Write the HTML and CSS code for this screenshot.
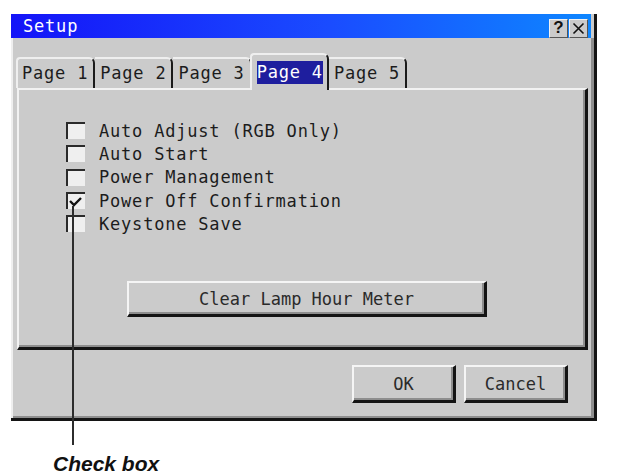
FILE: index.html
```html
<!DOCTYPE html>
<html lang="en">
<head>
  <meta charset="UTF-8" />
  <meta name="viewport" content="width=device-width, initial-scale=1.0" />
  <title>Setup</title>
  <link rel="stylesheet" href="styles.css">
</head>
<body>
  <div class="page">
    <div class="dialog">
      <div class="titlebar">
        <span class="title">Setup</span>
        <div class="caption-btns">
          <span class="cap-btn help">?</span>
          <span class="cap-btn close">
            <svg width="13" height="13" viewBox="0 0 13 13">
              <path d="M1.5 1.5 L11.5 11.5 M11.5 1.5 L1.5 11.5" stroke="#111" stroke-width="1.6" fill="none" />
            </svg>
          </span>
        </div>
      </div>

      <div class="dialog-body">
        <div class="tabs">
          <div class="tab first">Page 1</div>
          <div class="tab">Page 2</div>
          <div class="tab">Page 3</div>
          <div class="tab active"><span>Page 4</span></div>
          <div class="tab">Page 5</div>
        </div>

        <div class="panel">
          <ul class="options">
            <li><span class="box"></span>Auto Adjust (RGB Only)</li>
            <li><span class="box"></span>Auto Start</li>
            <li><span class="box"></span>Power Management</li>
            <li>
              <span class="box">
                <svg width="17" height="15" viewBox="0 0 17 15">
                  <path d="M2 7 L6 11 L13 4" stroke="#111" stroke-width="2.4" fill="none" />
                </svg>
              </span>Power Off Confirmation
            </li>
            <li><span class="box"></span>Keystone Save</li>
          </ul>
          <button class="btn wide">Clear Lamp Hour Meter</button>
        </div>

        <div class="footer">
          <button class="btn">OK</button>
          <button class="btn">Cancel</button>
        </div>
      </div>
    </div>

    <!-- callout line pointing at the checkbox column -->
    <div class="leader"></div>
    <div class="note">Check box</div>
  </div>
</body>
</html>
```

FILE: styles.css
```css
body {
  margin: 0;
  background: #fff;
  color: #1c1c1c;
  font-family: "DejaVu Sans Mono", monospace;
  font-size: 17px;
  letter-spacing: 0.8px;
}
.page {
  position: relative;
  padding: 14px 0 0 11px;
}
.dialog {
  width: 586px;
  height: 407px;
  box-sizing: border-box;
  display: flex;
  flex-direction: column;
  background: #cbcbcb;
  border-right: 3px solid #141414;
  border-bottom: 3px solid #141414;
}
.titlebar {
  height: 24px;
  margin-right: 3px;
  display: flex;
  align-items: center;
  justify-content: space-between;
  padding: 0 3px 0 12px;
  background: linear-gradient(to right, #1414f8, #1a4cff 55%, #0e86ff);
  color: #fff;
}
.title {
  line-height: 24px;
}
.caption-btns {
  display: flex;
  gap: 1px;
  margin-top: 4px;
}
.cap-btn {
  width: 19px;
  height: 19px;
  box-sizing: border-box;
  display: flex;
  align-items: center;
  justify-content: center;
  background: #cbcbcb;
  border-top: 1px solid #f2f2f2;
  border-left: 1px solid #f2f2f2;
  border-right: 1px solid #555;
  border-bottom: 1px solid #555;
}
.help {
  font-family: "Liberation Sans", Arial, sans-serif;
  font-weight: bold;
  font-size: 17px;
  letter-spacing: 0;
  color: #111;
}
.dialog-body {
  flex: 1;
  display: flex;
  flex-direction: column;
  padding: 15px 6px 0 2px;
  border-left: 2px solid #efefef;
  box-shadow: inset -3px -2px 0 #8e8e8e;
}

/* tab strip */
.tabs {
  display: flex;
  align-items: flex-end;
  height: 35px;
  margin-left: 1px;
}
.tab {
  height: 31px;
  box-sizing: border-box;
  padding: 0 5px 0 5px;
  line-height: 29px;
  border-top: 2px solid #efefef;
  border-right: 2px solid #1a1a1a;
  border-top-right-radius: 6px;
}
.tab.first {
  border-left: 2px solid #efefef;
  border-top-left-radius: 4px;
  padding-left: 4px;
}
.tab.active {
  position: relative;
  z-index: 1;
  height: 37px;
  margin-bottom: -2px;
  margin-left: -2px;
  padding: 6px 4px 0 5px;
  line-height: 23px;
  background: #cbcbcb;
  border-left: 2px solid #efefef;
  border-top-left-radius: 4px;
}
.tab.active span {
  display: inline-block;
  background: #1e1e9e;
  color: #fff;
}

/* option page */
.panel {
  height: 262px;
  box-sizing: border-box;
  margin-left: 2px;
  padding: 29px 0 0 47px;
  border-top: 2px solid #f2f2f2;
  border-left: 2px solid #f2f2f2;
  border-right: 3px solid #141414;
  border-bottom: 3px solid #141414;
  box-shadow: inset -2px -2px 0 #8e8e8e;
}
.options {
  list-style: none;
  margin: 0;
  padding: 0;
}
.options li {
  display: flex;
  align-items: center;
  height: 23.3px;
}
.box {
  width: 19px;
  height: 17px;
  box-sizing: border-box;
  margin-right: 14px;
  display: flex;
  align-items: flex-end;
  background: #efefef;
  border-top: 2px solid #2a2a2a;
  border-left: 2px solid #2a2a2a;
}
.btn {
  height: 38px;
  width: 104px;
  box-sizing: border-box;
  padding: 0;
  font: inherit;
  color: #2a2a2a;
  background: #cbcbcb;
  border-top: 2px solid #f5f5f5;
  border-left: 2px solid #f5f5f5;
  border-right: 3px solid #141414;
  border-bottom: 3px solid #141414;
  box-shadow: inset -2px -2px 0 #8e8e8e;
}
.btn.wide {
  width: 360px;
  height: 36px;
  margin: 46px 0 0 61px;
}
.footer {
  display: flex;
  justify-content: flex-end;
  gap: 8px;
  padding: 15px 20px 0 0;
}

/* callout */
.leader {
  position: absolute;
  left: 72px;
  top: 206px;
  width: 2px;
  height: 239px;
  background: #2c2c2c;
}
.note {
  margin: 32px 0 0 42px;
  font-family: "Liberation Sans", Arial, sans-serif;
  font-weight: bold;
  font-style: italic;
  font-size: 21px;
  letter-spacing: 0;
  line-height: 22px;
  color: #111;
}
```
